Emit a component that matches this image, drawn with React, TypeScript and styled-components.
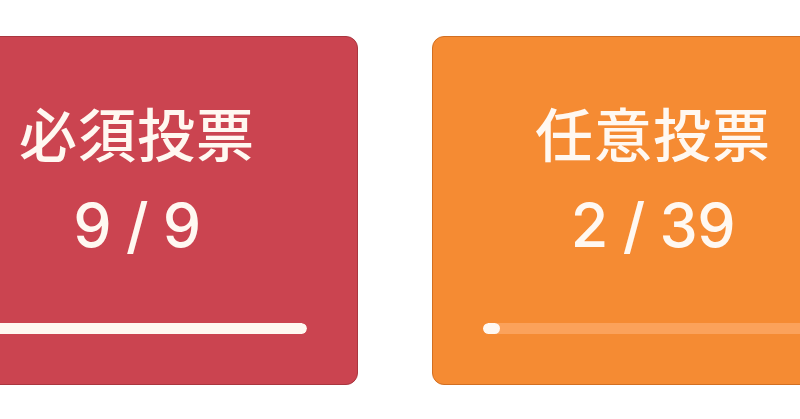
import styled, { createGlobalStyle } from 'styled-components';

const GlobalStyle = createGlobalStyle`
  html, body {
    margin: 0;
    background: #ffffff;
    overflow: hidden;
  }
`;

const tones = {
  red: { bg: '#cb4450', border: '#a9363f', track: '#cb4450' },
  orange: { bg: '#f58b33', border: '#d26f22', track: '#fba25b' },
};

type Tone = keyof typeof tones;

const Page = styled.main`
  width: 800px;
  height: 419px;
  padding-top: 36px;
  box-sizing: border-box;
  overflow: hidden;
`;

const Row = styled.div`
  display: flex;
  gap: 74px;
  margin-left: -84px;
`;

const Card = styled.section<{ $tone: Tone }>`
  flex: 0 0 auto;
  width: 442px;
  height: 349px;
  box-sizing: border-box;
  display: flex;
  flex-direction: column;
  align-items: center;
  padding: 60px 50px 0;
  background: ${(p) => tones[p.$tone].bg};
  border: 1px solid ${(p) => tones[p.$tone].border};
  border-radius: 12px;
  color: #fff8f1;
`;

const Title = styled.h2`
  margin: 0;
  font-family: 'Noto Sans CJK JP', 'Noto Sans CJK SC', sans-serif;
  font-size: 58px;
  font-weight: 500;
  line-height: 70px;
  letter-spacing: 1px;
`;

const Count = styled.div`
  margin-top: 22px;
  font-family: Inter, 'Liberation Sans', sans-serif;
  font-size: 61px;
  font-weight: 500;
  line-height: 72px;
  letter-spacing: -0.5px;
  word-spacing: -1px;
`;

const Track = styled.div<{ $tone: Tone }>`
  align-self: stretch;
  margin-top: 62px;
  height: 11px;
  border-radius: 6px;
  background: ${(p) => tones[p.$tone].track};
  overflow: hidden;
`;

const Fill = styled.div`
  height: 100%;
  border-radius: 6px;
  background: #fff8f1;
`;

const votes: { label: string; done: number; total: number; tone: Tone }[] = [
  { label: '必須投票', done: 9, total: 9, tone: 'red' },
  { label: '任意投票', done: 2, total: 39, tone: 'orange' },
];

export default function App() {
  return (
    <>
      <GlobalStyle />
      <Page>
        <Row>
          {votes.map((v) => (
            <Card key={v.label} $tone={v.tone}>
              <Title>{v.label}</Title>
              <Count>
                {v.done} / {v.total}
              </Count>
              <Track $tone={v.tone}>
                <Fill style={{ width: `${(v.done / v.total) * 100}%` }} />
              </Track>
            </Card>
          ))}
        </Row>
      </Page>
    </>
  );
}
